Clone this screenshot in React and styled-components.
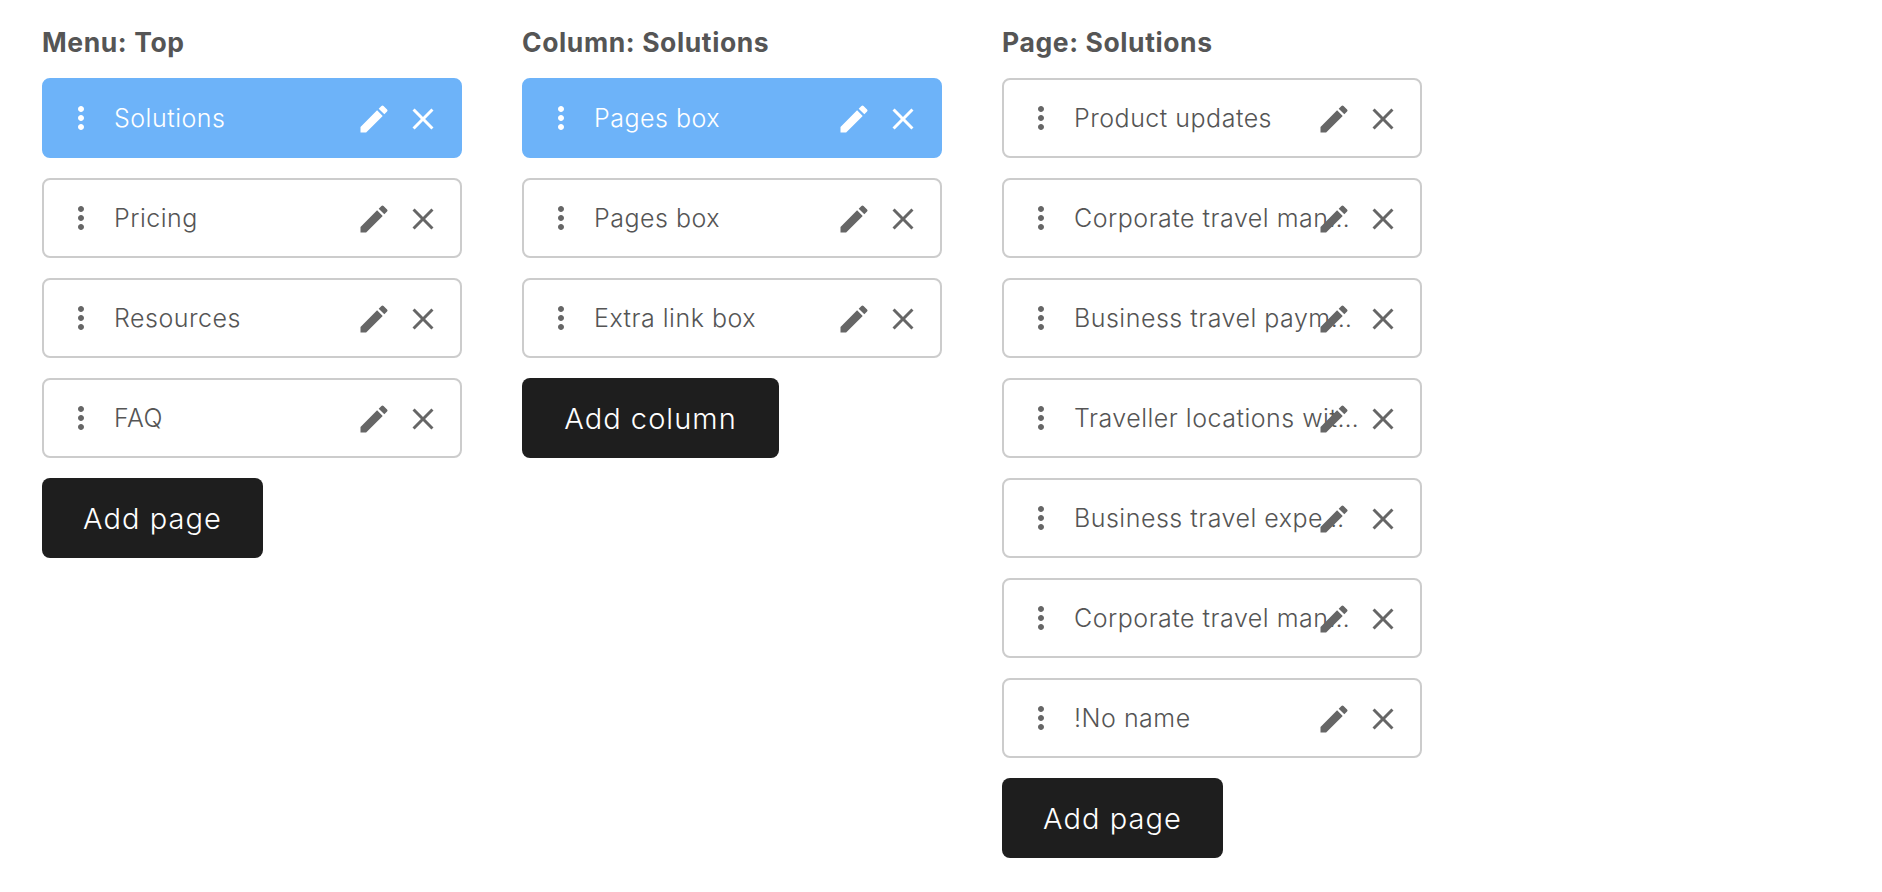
import React from 'react';
import styled, { createGlobalStyle } from 'styled-components';
import { MdMoreVert, MdEdit, MdClose } from 'react-icons/md';

const GlobalStyle = createGlobalStyle`
  html, body {
    margin: 0;
    background: #fff;
    font-family: "Inter", "Open Sans", "Liberation Sans", sans-serif;
  }
`;

const Page = styled.div`
  display: flex;
  align-items: flex-start;
  gap: 60px;
  padding: 24px 42px 0;
`;

const Column = styled.section`
  display: flex;
  flex-direction: column;
  align-items: flex-start;
  gap: 20px;
  width: 420px;
`;

const Title = styled.h2`
  margin: 0 0 -3px;
  height: 37px;
  line-height: 36px;
  font-size: 26.5px;
  font-weight: 700;
  letter-spacing: 0.6px;
  color: #555;
`;

const Row = styled.div`
  position: relative;
  box-sizing: border-box;
  display: flex;
  align-items: center;
  width: 100%;
  height: 80px;
  padding-left: 19px;
  border-radius: 8px;
  border: 2px solid ${p => (p.$active ? '#6db3f9' : '#ccc')};
  background: ${p => (p.$active ? '#6db3f9' : '#fff')};
  color: ${p => (p.$active ? '#fff' : '#666')};
`;

const Handle = styled(MdMoreVert)`
  flex: none;
  width: 36px;
  height: 36px;
`;

const Label = styled.span`
  width: 285px;
  margin-left: 15px;
  font-size: 25px;
  font-weight: 300;
  letter-spacing: 0.5px;
  white-space: nowrap;
  overflow: hidden;
  text-overflow: ellipsis;
  color: ${p => (p.$active ? '#fff' : '#555')};
`;

const Actions = styled.div`
  position: absolute;
  top: 21px;
  right: 19px;
  display: flex;
  gap: 13px;
`;

const EditIcon = styled(MdEdit)`
  width: 36px;
  height: 36px;
`;

const CloseIcon = styled(MdClose)`
  width: 36px;
  height: 36px;
`;

const AddButton = styled.button`
  height: 80px;
  width: ${p => p.$width}px;
  border: none;
  border-radius: 8px;
  background: #1e1e1e;
  color: #fff;
  font-family: inherit;
  font-size: 29px;
  font-weight: 300;
  letter-spacing: 1.05px;
`;

const columns = [
  {
    title: 'Menu: Top',
    items: ['Solutions', 'Pricing', 'Resources', 'FAQ'],
    active: 0,
    button: 'Add page',
    buttonWidth: 221,
  },
  {
    title: 'Column: Solutions',
    items: ['Pages box', 'Pages box', 'Extra link box'],
    active: 0,
    button: 'Add column',
    buttonWidth: 257,
  },
  {
    title: 'Page: Solutions',
    items: [
      'Product updates',
      'Corporate travel management',
      'Business travel payments',
      'Traveller locations with map',
      'Business travel expenses',
      'Corporate travel management',
      '!No name',
    ],
    active: -1,
    button: 'Add page',
    buttonWidth: 221,
  },
];

export default function App() {
  return (
    <>
      <GlobalStyle />
      <Page>
        {columns.map(col => (
          <Column key={col.title}>
            <Title>{col.title}</Title>
            {col.items.map((item, i) => (
              <Row key={i} $active={i === col.active}>
                <Handle />
                <Label $active={i === col.active}>{item}</Label>
                <Actions>
                  <EditIcon />
                  <CloseIcon />
                </Actions>
              </Row>
            ))}
            <AddButton $width={col.buttonWidth}>{col.button}</AddButton>
          </Column>
        ))}
      </Page>
    </>
  );
}
